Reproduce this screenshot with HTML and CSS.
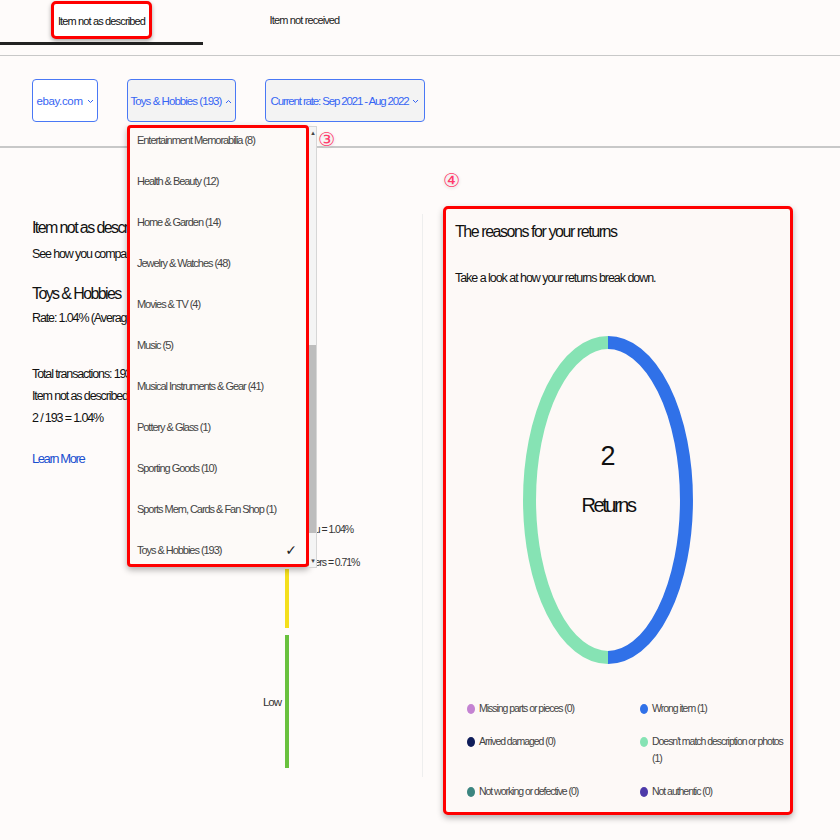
FILE: index.html
```html
<!DOCTYPE html>
<html lang="en">
<head>
    <meta charset="UTF-8">
    <meta name="viewport" content="width=device-width, initial-scale=1.0">
    <title>Seller returns - Item not as described</title>
    <link rel="stylesheet" href="styles.css">
</head>
<body>
    <!-- Tabs -->
    <nav class="tabs">
        <div class="tab tab-active"><span class="note-box">Item not as described</span></div>
        <div class="tab">Item not received</div>
    </nav>

    <!-- Filters -->
    <div class="filters">
        <button class="filter filter-plain filter-site">ebay.com
            <svg class="chev" width="7" height="5" viewBox="0 0 7 5"><path d="M1 1l2.5 2.5L6 1" fill="none" stroke="currentColor" stroke-width="1"/></svg>
        </button>
        <div class="filter-wrap">
            <button class="filter filter-cat">Toys &amp; Hobbies (193)
                <svg class="chev" width="7" height="5" viewBox="0 0 7 5"><path d="M1 4l2.5-2.5L6 4" fill="none" stroke="currentColor" stroke-width="1"/></svg>
            </button>

            <!-- Open category dropdown -->
            <div class="dropdown">
                <ul class="dropdown-list">
                    <li>Entertainment Memorabilia (8)</li>
                    <li>Health &amp; Beauty (12)</li>
                    <li>Home &amp; Garden (14)</li>
                    <li>Jewelry &amp; Watches (48)</li>
                    <li>Movies &amp; TV (4)</li>
                    <li>Music (5)</li>
                    <li>Musical Instruments &amp; Gear (41)</li>
                    <li>Pottery &amp; Glass (1)</li>
                    <li>Sporting Goods (10)</li>
                    <li>Sports Mem, Cards &amp; Fan Shop (1)</li>
                    <li class="selected">Toys &amp; Hobbies (193) <span class="check">&#10003;</span></li>
                </ul>
                <div class="scrollbar">
                    <span class="scroll-arrow">&#9652;</span>
                    <span class="scroll-track"><span class="scroll-thumb"></span></span>
                    <span class="scroll-arrow">&#9662;</span>
                </div>
            </div>
            <span class="step step-3">&#9314;</span>
        </div>
        <button class="filter filter-date">Current rate: Sep 2021 - Aug 2022
            <svg class="chev" width="7" height="5" viewBox="0 0 7 5"><path d="M1 1l2.5 2.5L6 1" fill="none" stroke="currentColor" stroke-width="1"/></svg>
        </button>
    </div>

    <main class="content">
        <section class="overview">
            <div class="summary">
                <h2>Item not as described rate</h2>
                <p>See how you compare to other sellers</p>
                <h3>Toys &amp; Hobbies</h3>
                <p>Rate: 1.04% (Average)</p>
                <div class="totals">
                    <p>Total transactions: 193</p>
                    <p>Item not as described: 2</p>
                    <p>2 / 193 = 1.04%</p>
                </div>
                <a class="learn-more" href="#">Learn More</a>
            </div>

            <div class="gauge">
                <div class="gauge-row gauge-high">
                    <span class="gauge-label">High</span>
                    <span class="gauge-bar bar-red"></span>
                    <div class="gauge-marks">
                        <span class="mark mark-you">You = 1.04%</span>
                        <span class="mark mark-others">Other sellers = 0.71%</span>
                    </div>
                </div>
                <div class="gauge-row gauge-mid">
                    <span class="gauge-label"></span>
                    <span class="gauge-bar bar-yellow"></span>
                </div>
                <div class="gauge-row gauge-low">
                    <span class="gauge-label">Low</span>
                    <span class="gauge-bar bar-green"></span>
                </div>
            </div>
        </section>

        <div class="divider"></div>

        <section class="reasons">
            <span class="step">&#9315;</span>
            <div class="card">
                <h2>The reasons for your returns</h2>
                <p class="card-sub">Take a look at how your returns break down.</p>

                <div class="donut">
                    <svg width="170" height="328" viewBox="0 0 170 328">
                        <path d="M85 6.5A78.5 157.5 0 0 1 85 321.5" fill="none" stroke="#3071e8" stroke-width="13"/>
                        <path d="M85 321.5A78.5 157.5 0 0 1 85 6.5" fill="none" stroke="#86e3b4" stroke-width="13"/>
                    </svg>
                    <div class="donut-label">
                        <span class="donut-num">2</span>
                        <span class="donut-text">Returns</span>
                    </div>
                </div>

                <ul class="legend">
                    <li><span class="dot" style="background:#c483d2"></span>Missing parts or pieces (0)</li>
                    <li><span class="dot" style="background:#3071e8"></span>Wrong item (1)</li>
                    <li><span class="dot" style="background:#0f1d5a"></span>Arrived damaged (0)</li>
                    <li><span class="dot" style="background:#86e3b4"></span>Doesn't match description or photos (1)</li>
                    <li><span class="dot" style="background:#3b8580"></span>Not working or defective (0)</li>
                    <li><span class="dot" style="background:#4d3aa9"></span>Not authentic (0)</li>
                </ul>
            </div>
        </section>
    </main>
</body>
</html>
```

FILE: styles.css
```css
body {
    margin: 0;
    font-family: "Liberation Sans", Arial, sans-serif;
    letter-spacing: -0.065em;
    color: #222;
    background-color: #fefbfa;
}

ul {
    margin: 0;
    padding: 0;
    list-style: none;
}

p, h2, h3 {
    margin: 0;
}

/* --- Tabs --- */
.tabs {
    display: flex;
    height: 45px;
    border-bottom: 1px solid #c8c8c8;
    padding-bottom: 10px;
}

.tab {
    width: 203px;
    display: flex;
    justify-content: center;
    align-items: center;
    font-size: 11px;
    letter-spacing: -0.078em;
    color: #222;
    padding-bottom: 5px;
    box-sizing: border-box;
}

.tab-active {
    border-bottom: 3px solid #222;
    align-items: flex-start;
    padding: 1px 0 0;
    color: #111;
}

.note-box {
    display: inline-block;
    padding: 11px 4px 9px;
    border: 3px solid #f00;
    border-radius: 5px;
    box-shadow: 0 2px 4px rgba(0, 0, 0, 0.35);
    background: #fff;
}

/* --- Filters --- */
.filters {
    display: flex;
    gap: 29px;
    padding: 23px 32px 24px;
    border-bottom: 2px solid #c8c8c8;
}

.filter {
    display: flex;
    align-items: center;
    justify-content: center;
    gap: 4px;
    height: 43px;
    padding: 0;
    border: 1px solid #4a78f5;
    border-radius: 4px;
    background: #f3f3f3;
    color: #3665f3;
    font-family: inherit;
    font-size: 11.5px;
    letter-spacing: -0.083em;
    white-space: nowrap;
}

.filter-plain {
    background: #fff;
    letter-spacing: -0.03em;
}

.filter-site { width: 66px; }
.filter-cat { width: 109px; }
.filter-date { width: 160px; letter-spacing: -0.1em; }

.chev {
    flex: none;
    margin-top: 1px;
}

.filter-wrap {
    position: relative;
}

/* --- Dropdown (overlay) --- */
.dropdown {
    position: absolute;
    top: 46px;
    left: 0;
    z-index: 20;
    display: flex;
}

.dropdown-list {
    width: 176px;
    height: 436px;
    overflow: hidden;
    border: 3px solid #f00;
    border-radius: 4px;
    background: #fdfaf8;
    box-shadow: 0 3px 6px rgba(0, 0, 0, 0.3);
}

.dropdown-list li {
    display: flex;
    align-items: center;
    justify-content: space-between;
    height: 41px;
    padding: 0 10px 0 7px;
    font-size: 11px;
    color: #444;
}

.dropdown-list li:first-child {
    margin-top: -9px;
}

.check {
    font-family: "DejaVu Sans", sans-serif;
    font-size: 14px;
    color: #222;
}

.scrollbar {
    display: flex;
    flex-direction: column;
    align-items: center;
    width: 7px;
    height: 440px;
    margin-top: 1px;
    border: 1px solid #d6d6d6;
    border-left: none;
    background: #f4f4f4;
}

.scroll-arrow {
    font-family: "DejaVu Sans", sans-serif;
    font-size: 7px;
    line-height: 12px;
    color: #444;
}

.scroll-track {
    flex: 1;
    width: 100%;
    display: flex;
    flex-direction: column;
    justify-content: flex-end;
    padding-bottom: 22px;
}

.scroll-thumb {
    height: 188px;
    background: #bdbdbd;
}

.step {
    font-family: "DejaVu Sans", sans-serif;
    font-size: 19px;
    line-height: 20px;
    letter-spacing: 0;
    color: #ff3b6b;
    text-shadow: 0 0 2px #fff, 0 0 3px #fff, 0 1px 3px rgba(0, 0, 0, 0.25);
}

.step-3 {
    position: absolute;
    left: 191px;
    top: 50px;
}

/* --- Main content --- */
.content {
    display: flex;
}

.overview {
    width: 422px;
    display: flex;
    box-sizing: border-box;
    padding: 69px 0 0 32px;
}

.summary {
    width: 208px;
}

.summary h2, .summary h3 {
    font-size: 16px;
    font-weight: normal;
    line-height: 22px;
    letter-spacing: -0.1em;
    color: #111;
    white-space: nowrap;
}

.summary p {
    font-size: 12.5px;
    line-height: 18px;
    letter-spacing: -0.09em;
    color: #111;
    white-space: nowrap;
}

.summary h2 + p {
    margin-top: 6px;
}

.summary h3 {
    margin-top: 20px;
}

.summary h3 + p {
    margin-top: 4px;
}

.totals {
    margin-top: 36px;
}

.totals p {
    line-height: 22px;
}

.learn-more {
    display: block;
    margin-top: 20px;
    font-size: 13px;
    line-height: 20px;
    letter-spacing: -0.11em;
    color: #1a4fd0;
    text-decoration: none;
}

/* Rate gauge */
.gauge {
    display: flex;
    flex-direction: column;
    gap: 7px;
    margin-top: -3px;
}

.gauge-row {
    display: flex;
    align-items: center;
    position: relative;
}

.gauge-label {
    width: 41px;
    text-align: right;
    font-size: 11.5px;
    color: #333;
    margin-right: 4px;
}

.gauge-bar {
    width: 4px;
    align-self: stretch;
}

.gauge-high { height: 348px; }
.gauge-mid { height: 59px; }
.gauge-low { height: 133px; }

.bar-red { background: #e0312b; }
.bar-yellow { background: #f4df1c; }
.bar-green { background: #69c13e; }

.gauge-marks {
    position: absolute;
    left: 0;
    bottom: -7px;
    display: flex;
    flex-direction: column;
    gap: 19px;
    font-size: 10.5px;
    line-height: 14px;
    color: #333;
    white-space: nowrap;
}

.mark-you { margin-left: 65px; }
.mark-others { margin-left: 40px; }

.divider {
    width: 1px;
    margin: 66px 0 64px;
    background: #eeeeee;
}

/* --- Returns card --- */
.reasons {
    padding: 22px 0 26px 20px;
}

.card {
    width: 350px;
    box-sizing: border-box;
    margin-top: 15px;
    padding: 11px 4px 12px 8px;
    border: 3px solid #f00;
    border-radius: 5px;
    background: #fdf9f7;
    box-shadow: 0 3px 6px rgba(0, 0, 0, 0.3);
}

.card h2 {
    font-size: 16px;
    font-weight: normal;
    line-height: 24px;
    letter-spacing: -0.09em;
    color: #111;
    padding-left: 1px;
}

.card-sub {
    margin-top: 25px;
    font-size: 12.5px;
    line-height: 18px;
    color: #111;
    padding-left: 1px;
}

.donut {
    display: grid;
    width: 170px;
    margin: 49px 0 0 69px;
}

.donut svg, .donut-label {
    grid-area: 1 / 1;
}

.donut-label {
    display: flex;
    flex-direction: column;
    align-items: center;
    padding-top: 105px;
    color: #111;
}

.donut-num {
    font-size: 27px;
    line-height: 30px;
    letter-spacing: 0;
}

.donut-text {
    margin-top: 21px;
    font-size: 20px;
    line-height: 26px;
    letter-spacing: -0.12em;
}

.legend {
    display: grid;
    grid-template-columns: 173px 154px;
    row-gap: 16px;
    margin-top: 36px;
    padding-left: 13px;
}

.legend li {
    display: flex;
    align-items: flex-start;
    gap: 4px;
    font-size: 10.5px;
    line-height: 17px;
    color: #444;
}

.dot {
    flex: none;
    width: 8px;
    height: 10px;
    margin-top: 4px;
    border-radius: 50%;
}
```
